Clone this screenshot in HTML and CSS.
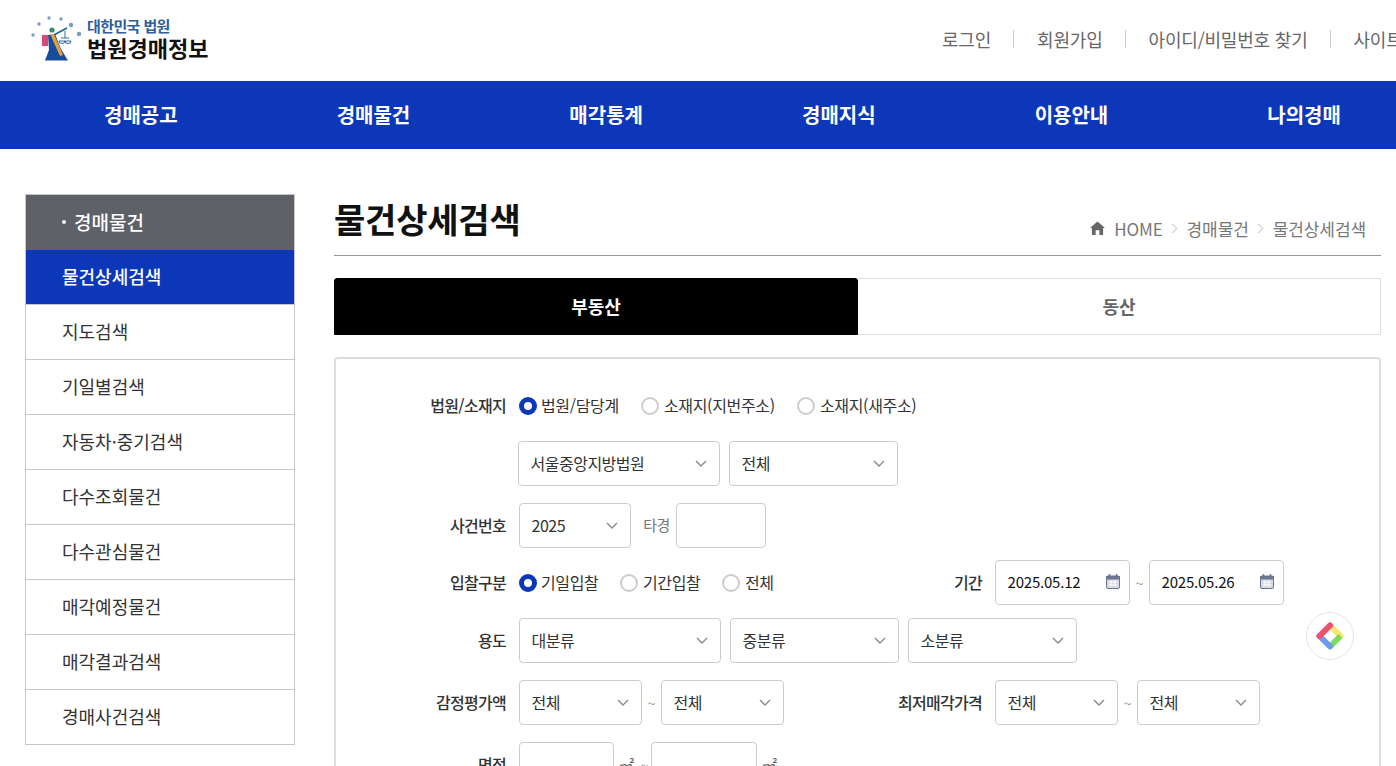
FILE: index.html
```html
<!DOCTYPE html>
<html lang="ko">
<head>
<meta charset="utf-8">
<title>법원경매정보</title>
<link rel="stylesheet" href="styles.css">
</head>
<body>
<header class="top">
  <a class="logo">
    <svg class="logo-mark" width="52" height="48" viewBox="0 0 52 48">
      <g fill="#7b9cc0">
        <circle cx="2" cy="21" r="1.7"/><circle cx="8" cy="10" r="1.7"/><circle cx="18" cy="4" r="1.7"/><circle cx="30" cy="5" r="1.7"/><circle cx="40" cy="11" r="2.2"/><circle cx="48" cy="20" r="2.2"/>
      </g>
      <path d="M21 22 L36 14" stroke="#1a6a8a" stroke-width="1.6" fill="none"/>
      <circle cx="21" cy="16" r="2.6" fill="#2f8f6f"/>
      <path d="M34 17 v7 M30 24 h8 M28 27 a3 2.5 0 0 0 6 0z M34 27 a3 2.5 0 0 0 6 0z" stroke="#1d5a8f" stroke-width=".9" fill="none"/>
      <path d="M17 21 L24 20 L30 35 L36 45 L37 46.5 L14 46.5 L18 36z" fill="#174b9c"/>
      <path d="M19 20 L23 20 L32 41 L29 42z" fill="#e3a13a"/>
      <rect x="11" y="21" width="6" height="11" fill="#d9487a"/>
    </svg>
    <span class="logo-text">
      <span class="logo-sub">대한민국 법원</span>
      <span class="logo-main">법원경매정보</span>
    </span>
  </a>
  <nav class="util">
    <a>로그인</a><i></i><a>회원가입</a><i></i><a>아이디/비밀번호 찾기</a><i></i><a>사이트맵</a>
  </nav>
</header>

<nav class="gnb">
  <a>경매공고</a><a>경매물건</a><a>매각통계</a><a>경매지식</a><a>이용안내</a><a>나의경매</a>
</nav>

<div class="page">
  <aside class="side">
    <h2 class="side-title"><span class="side-dot"></span>경매물건</h2>
    <a class="side-item on">물건상세검색</a>
    <a class="side-item">지도검색</a>
    <a class="side-item">기일별검색</a>
    <a class="side-item">자동차·중기검색</a>
    <a class="side-item">다수조회물건</a>
    <a class="side-item">다수관심물건</a>
    <a class="side-item">매각예정물건</a>
    <a class="side-item">매각결과검색</a>
    <a class="side-item">경매사건검색</a>
  </aside>

  <main class="main">
    <div class="head">
      <h1>물건상세검색</h1>
      <div class="crumb">
        <svg width="15" height="14" viewBox="0 0 16 15"><path d="M8 .5 L16 7.6 L14 7.6 L14 15 L10 15 L10 10 L6 10 L6 15 L2 15 L2 7.6 L0 7.6z" fill="#666"/></svg>
        <span class="home">HOME</span>
        <svg class="gt" width="7" height="11" viewBox="0 0 7 11"><path d="M1 1l5 4.5-5 4.5" fill="none" stroke="#bbb"/></svg>
        <span>경매물건</span>
        <svg class="gt" width="7" height="11" viewBox="0 0 7 11"><path d="M1 1l5 4.5-5 4.5" fill="none" stroke="#bbb"/></svg>
        <span>물건상세검색</span>
      </div>
    </div>

    <div class="tabs">
      <a class="tab on">부동산</a>
      <a class="tab">동산</a>
    </div>

    <form class="box">
      <div class="row r-radio">
        <label class="lb">법원/소재지</label>
        <span class="radio on"></span><span class="rt w-a">법원/담당계</span>
        <span class="radio"></span><span class="rt w-b">소재지(지번주소)</span>
        <span class="radio"></span><span class="rt">소재지(새주소)</span>
      </div>
      <div class="row r-a">
        <span class="lb"></span>
        <span class="sel w202 shift">서울중앙지방법원<svg class="chev" width="12" height="7" viewBox="0 0 12 7"><path d="M1 1l5 5 5-5" fill="none" stroke="#888" stroke-width="1.4"/></svg></span>
        <span class="sel w169 ml9 shift">전체<svg class="chev" width="12" height="7" viewBox="0 0 12 7"><path d="M1 1l5 5 5-5" fill="none" stroke="#888" stroke-width="1.4"/></svg></span>
      </div>
      <div class="row r-b">
        <label class="lb">사건번호</label>
        <span class="sel w112">2025<svg class="chev" width="12" height="7" viewBox="0 0 12 7"><path d="M1 1l5 5 5-5" fill="none" stroke="#888" stroke-width="1.4"/></svg></span>
        <span class="mid">타경</span>
        <span class="sel w90"></span>
      </div>
      <div class="row r-c">
        <label class="lb">입찰구분</label>
        <span class="col">
          <span class="radio on"></span><span class="rt w-c">기일입찰</span>
          <span class="radio"></span><span class="rt w-d">기간입찰</span>
          <span class="radio"></span><span class="rt">전체</span>
        </span>
        <label class="lb2">기간</label>
        <span class="sel w135 date">2025.05.12<svg class="cal" width="14" height="15" viewBox="0 0 14 15"><rect x=".5" y="2" width="13" height="12.5" rx="1.5" fill="#d5d9e2" stroke="#6d7690"/><rect x="0" y="2" width="14" height="3.5" fill="#6d7690"/><path d="M3.5 0v3M10.5 0v3" stroke="#6d7690" stroke-width="1.5"/><path d="M3 8h8M3 11h8M5 6.5v6M9 6.5v6" stroke="#fff"/></svg></span>
        <span class="tilde t19">~</span>
        <span class="sel w135 date">2025.05.26<svg class="cal" width="14" height="15" viewBox="0 0 14 15"><rect x=".5" y="2" width="13" height="12.5" rx="1.5" fill="#d5d9e2" stroke="#6d7690"/><rect x="0" y="2" width="14" height="3.5" fill="#6d7690"/><path d="M3.5 0v3M10.5 0v3" stroke="#6d7690" stroke-width="1.5"/><path d="M3 8h8M3 11h8M5 6.5v6M9 6.5v6" stroke="#fff"/></svg></span>
      </div>
      <div class="row r-d">
        <label class="lb">용도</label>
        <span class="sel w202">대분류<svg class="chev" width="12" height="7" viewBox="0 0 12 7"><path d="M1 1l5 5 5-5" fill="none" stroke="#888" stroke-width="1.4"/></svg></span>
        <span class="sel w169 ml9">중분류<svg class="chev" width="12" height="7" viewBox="0 0 12 7"><path d="M1 1l5 5 5-5" fill="none" stroke="#888" stroke-width="1.4"/></svg></span>
        <span class="sel w169 ml9">소분류<svg class="chev" width="12" height="7" viewBox="0 0 12 7"><path d="M1 1l5 5 5-5" fill="none" stroke="#888" stroke-width="1.4"/></svg></span>
      </div>
      <div class="row r-e">
        <label class="lb">감정평가액</label>
        <span class="col">
          <span class="sel w123">전체<svg class="chev" width="12" height="7" viewBox="0 0 12 7"><path d="M1 1l5 5 5-5" fill="none" stroke="#888" stroke-width="1.4"/></svg></span>
          <span class="tilde t19">~</span>
          <span class="sel w123">전체<svg class="chev" width="12" height="7" viewBox="0 0 12 7"><path d="M1 1l5 5 5-5" fill="none" stroke="#888" stroke-width="1.4"/></svg></span>
        </span>
        <label class="lb2">최저매각가격</label>
        <span class="sel w123">전체<svg class="chev" width="12" height="7" viewBox="0 0 12 7"><path d="M1 1l5 5 5-5" fill="none" stroke="#888" stroke-width="1.4"/></svg></span>
        <span class="tilde t19">~</span>
        <span class="sel w123">전체<svg class="chev" width="12" height="7" viewBox="0 0 12 7"><path d="M1 1l5 5 5-5" fill="none" stroke="#888" stroke-width="1.4"/></svg></span>
      </div>
      <div class="row r-f">
        <label class="lb">면적</label>
        <span class="sel w95"></span>
        <span class="unit">㎡</span><span class="tilde t13">~</span>
        <span class="sel w106"></span>
        <span class="unit">㎡</span>
      </div>
    </form>
  </main>
</div>

<button class="float" type="button" aria-label="바로가기">
  <svg width="30" height="30" viewBox="0 0 30 30">
    <g fill="none" stroke-width="6">
      <path d="M15 4.5 L25.5 15" stroke="#f3e96b" stroke-linecap="round"/>
      <path d="M25.5 15 L15 25.5" stroke="#7ddc5e"/>
      <path d="M15 25.5 L4.5 15" stroke="#6c9cf0" stroke-linecap="round"/>
      <path d="M4.5 15 L15 4.5" stroke="#f0506e" stroke-linecap="round"/>
    </g>
  </svg>
</button>
</body>
</html>
```
FILE: styles.css
```css
* { box-sizing: border-box; }
html, body { margin: 0; height: 766px; overflow: hidden; background: #fff; }
body { font-family: "Noto Sans CJK KR", "Noto Sans", sans-serif; color: #333; position: relative; }

.top { height: 81px; display: flex; align-items: flex-start; padding-left: 31px; white-space: nowrap; }
.logo { display: flex; width: 911px; padding-top: 14px; flex: none; }
.logo-mark { flex: none; }
.logo-text { display: flex; flex-direction: column; margin-left: 4px; margin-top: 4px; }
.logo-sub { font-size: 15px; line-height: 16px; font-weight: 700; color: #2f5d9e; letter-spacing: -.6px; }
.logo-main { font-size: 22px; line-height: 24px; font-weight: 700; color: #111; margin-top: 1px; }
.util { display: flex; align-items: center; height: 77px; flex: none; font-size: 18px; letter-spacing: -.2px; color: #666; }
.util i { width: 1px; height: 18px; background: #ccc; margin: 0 23px 0 22px; }

.gnb { height: 68px; background: #0d37b9; padding-left: 24.5px; display: flex; width: 1421px; }
.gnb a { flex: 0 0 232.67px; text-align: center; color: #fff; font-size: 20px; font-weight: 700; line-height: 67px; }

.page { display: flex; padding: 45px 0 0 25px; align-items: flex-start; }

.side { flex: none; width: 270px; border: 1px solid #c8c8c8; }
.side-title { margin: 0; height: 55px; padding-bottom: 2px; background: #5f6168; color: #fff; font-size: 19px; font-weight: 500; display: flex; align-items: center; padding-left: 36px; }
.side-dot { width: 4px; height: 4px; background: #fff; border-radius: 50%; margin-right: 8px; }
.side-item { display: block; height: 55px; line-height: 52px; padding-left: 36px; font-size: 18px; color: #333; border-top: 1px solid #c8c8c8; }
.side-item.on { background: #0d37b9; color: #fff; font-weight: 500; border-top: 0; height: 54px; }

.main { flex: none; width: 1047px; margin-left: 39px; }
.head { height: 62px; border-bottom: 1px solid #999; display: flex; justify-content: space-between; align-items: flex-start; }
.head h1 { margin: 0; font-size: 34px; line-height: 50px; font-weight: 700; color: #111; letter-spacing: -.2px; }
.crumb { display: flex; align-items: center; height: 32px; margin-top: 18px; padding-right: 15px; font-size: 17px; color: #777; letter-spacing: -.1px; }
.crumb .home { margin-left: 9px; }
.crumb .gt { margin: 0 9px 0 8px; }

.tabs { display: flex; margin-top: 22px; height: 57px; }
.tab { flex: 1; text-align: center; line-height: 55px; font-size: 18px; font-weight: 700; color: #666; border: 1px solid #ddd; border-left: 0; }
.tab.on { background: #000; color: #fff; border: 1px solid #000; border-radius: 3px 3px 0 0; }

.box { margin-top: 22px; height: 600px; border: 2px solid #ddd; border-radius: 4px; padding-top: 27px; }
.row { display: flex; align-items: center; height: 45px; font-size: 16px; letter-spacing: -.5px; color: #333; }
.r-radio { height: 40px; }
.r-a { margin-top: 15px; }
.r-b { margin-top: 17px; }
.r-c { margin-top: 12px; }
.r-d { margin-top: 13px; }
.r-e { margin-top: 17px; }
.r-f { margin-top: 17px; }

.lb { flex: none; width: 170px; text-align: right; font-weight: 500; color: #333; margin-right: 13px; padding-bottom: 2px; letter-spacing: -.7px; }
.lb2 { flex: none; width: 120px; text-align: right; font-weight: 500; margin-left: -120px; margin-right: 13px; padding-bottom: 2px; letter-spacing: -.7px; }
.col { flex: none; width: 463px; display: flex; align-items: center; }

.radio { flex: none; width: 18px; height: 18px; border-radius: 50%; border: 2px solid #ccc; background: #fff; margin-right: 5px; }
.radio.on { border: 5px solid #0d37b9; margin-right: 4px; }
.rt { flex: none; letter-spacing: -.35px; padding-bottom: 2px; }
.w-a { width: 100px; }
.w-b { width: 133px; }
.w-c { width: 79px; }
.w-d { width: 79px; }

.sel { flex: none; height: 45px; border: 1px solid #ccc; border-radius: 4px; padding: 0 12.5px 2px 11.5px; display: flex; align-items: center; justify-content: space-between; background: #fff; }
.sel .chev { margin-top: 2px; }
.shift { margin-left: -1px; }
.ml9 { margin-left: 9px; }
.w202 { width: 202px; }
.w169 { width: 169px; }
.w112 { width: 112px; }
.w90 { width: 90px; }
.w135 { width: 135px; }
.w123 { width: 123px; }
.w95 { width: 95px; }
.w106 { width: 106px; }
.date { color: #111; padding-right: 9px; letter-spacing: -.2px; font-size: 15px; }
.mid { flex: none; width: 45px; padding: 0 0 2px 6px; text-align: center; color: #777; font-size: 15px; }
.tilde { flex: none; color: #888; font-size: 14px; text-align: center; }
.t19 { width: 19px; }
.t13 { width: 13px; }
.unit { flex: none; width: 24px; text-align: center; color: #666; font-size: 16px; line-height: 20px; }

.float { position: absolute; left: 1306px; top: 612px; width: 48px; height: 48px; border-radius: 50%; background: #fff; border: 1px solid #e5e5e5; padding: 0; display: flex; align-items: center; justify-content: center; }
```
